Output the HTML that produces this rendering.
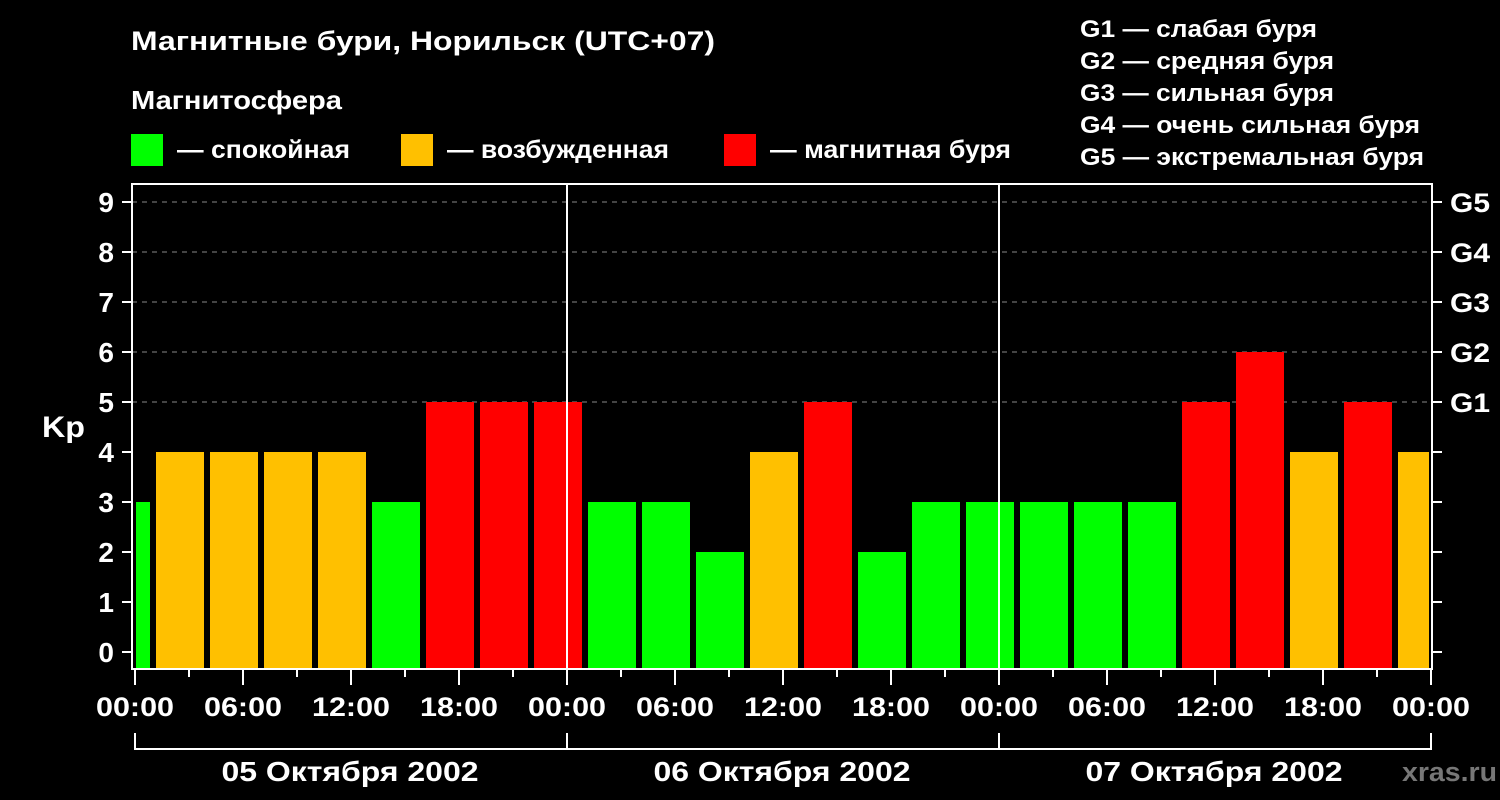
<!DOCTYPE html>
<html><head><meta charset="utf-8"><style>
html,body{margin:0;padding:0;background:#000;width:1500px;height:800px;overflow:hidden}
svg{display:block}
text{font-family:"Liberation Sans",sans-serif;font-weight:bold;fill:#fff}
</style></head><body>
<svg width="1500" height="800" viewBox="0 0 1500 800" xmlns="http://www.w3.org/2000/svg">
<rect width="1500" height="800" fill="#000"/>
<text x="131" y="50" font-size="27" textLength="584" lengthAdjust="spacingAndGlyphs">Магнитные бури, Норильск (UTC+07)</text>
<text x="131" y="109" font-size="26" textLength="211" lengthAdjust="spacingAndGlyphs">Магнитосфера</text>
<rect x="131" y="134" width="32" height="32" fill="#00ff00"/>
<text x="177" y="158" font-size="25" textLength="173" lengthAdjust="spacingAndGlyphs">— спокойная</text>
<rect x="401" y="134" width="32" height="32" fill="#ffc000"/>
<text x="447" y="158" font-size="25" textLength="222" lengthAdjust="spacingAndGlyphs">— возбужденная</text>
<rect x="724" y="134" width="32" height="32" fill="#ff0000"/>
<text x="770" y="158" font-size="25" textLength="241" lengthAdjust="spacingAndGlyphs">— магнитная буря</text>
<g font-size="24">
<text x="1080" y="37" textLength="237" lengthAdjust="spacingAndGlyphs">G1 — слабая буря</text>
<text x="1080" y="69" textLength="254" lengthAdjust="spacingAndGlyphs">G2 — средняя буря</text>
<text x="1080" y="101" textLength="254" lengthAdjust="spacingAndGlyphs">G3 — сильная буря</text>
<text x="1080" y="133" textLength="340" lengthAdjust="spacingAndGlyphs">G4 — очень сильная буря</text>
<text x="1080" y="165" textLength="344" lengthAdjust="spacingAndGlyphs">G5 — экстремальная буря</text>
</g>
<g stroke="#888" stroke-width="1" stroke-dasharray="5,5">
<line x1="132" y1="202" x2="1432" y2="202"/>
<line x1="132" y1="252" x2="1432" y2="252"/>
<line x1="132" y1="302" x2="1432" y2="302"/>
<line x1="132" y1="352" x2="1432" y2="352"/>
<line x1="132" y1="402" x2="1432" y2="402"/>
</g>
<g>
<rect x="136" y="502" width="14" height="166" fill="#00ff00"/>
<rect x="156" y="452" width="48" height="216" fill="#ffc000"/>
<rect x="210" y="452" width="48" height="216" fill="#ffc000"/>
<rect x="264" y="452" width="48" height="216" fill="#ffc000"/>
<rect x="318" y="452" width="48" height="216" fill="#ffc000"/>
<rect x="372" y="502" width="48" height="166" fill="#00ff00"/>
<rect x="426" y="402" width="48" height="266" fill="#ff0000"/>
<rect x="480" y="402" width="48" height="266" fill="#ff0000"/>
<rect x="534" y="402" width="48" height="266" fill="#ff0000"/>
<rect x="588" y="502" width="48" height="166" fill="#00ff00"/>
<rect x="642" y="502" width="48" height="166" fill="#00ff00"/>
<rect x="696" y="552" width="48" height="116" fill="#00ff00"/>
<rect x="750" y="452" width="48" height="216" fill="#ffc000"/>
<rect x="804" y="402" width="48" height="266" fill="#ff0000"/>
<rect x="858" y="552" width="48" height="116" fill="#00ff00"/>
<rect x="912" y="502" width="48" height="166" fill="#00ff00"/>
<rect x="966" y="502" width="48" height="166" fill="#00ff00"/>
<rect x="1020" y="502" width="48" height="166" fill="#00ff00"/>
<rect x="1074" y="502" width="48" height="166" fill="#00ff00"/>
<rect x="1128" y="502" width="48" height="166" fill="#00ff00"/>
<rect x="1182" y="402" width="48" height="266" fill="#ff0000"/>
<rect x="1236" y="352" width="48" height="316" fill="#ff0000"/>
<rect x="1290" y="452" width="48" height="216" fill="#ffc000"/>
<rect x="1344" y="402" width="48" height="266" fill="#ff0000"/>
<rect x="1398" y="452" width="31" height="216" fill="#ffc000"/>
</g>
<g stroke="#fff" stroke-width="2" fill="none">
<line x1="567" y1="183" x2="567" y2="668"/>
<line x1="999" y1="183" x2="999" y2="668"/>
<rect x="132" y="184" width="1300" height="485"/>
</g>
<g stroke="#fff" stroke-width="2">
<line x1="122" y1="202" x2="132" y2="202"/><line x1="122" y1="252" x2="132" y2="252"/><line x1="122" y1="302" x2="132" y2="302"/><line x1="122" y1="352" x2="132" y2="352"/><line x1="122" y1="402" x2="132" y2="402"/><line x1="122" y1="452" x2="132" y2="452"/><line x1="122" y1="502" x2="132" y2="502"/><line x1="122" y1="552" x2="132" y2="552"/><line x1="122" y1="602" x2="132" y2="602"/><line x1="122" y1="652" x2="132" y2="652"/>
<line x1="1432" y1="202" x2="1442" y2="202"/><line x1="1432" y1="252" x2="1442" y2="252"/><line x1="1432" y1="302" x2="1442" y2="302"/><line x1="1432" y1="352" x2="1442" y2="352"/><line x1="1432" y1="402" x2="1442" y2="402"/><line x1="1432" y1="452" x2="1442" y2="452"/><line x1="1432" y1="502" x2="1442" y2="502"/><line x1="1432" y1="552" x2="1442" y2="552"/><line x1="1432" y1="602" x2="1442" y2="602"/><line x1="1432" y1="652" x2="1442" y2="652"/>
</g>
<g font-size="28" text-anchor="end">
<text x="114" y="212">9</text><text x="114" y="262">8</text><text x="114" y="312">7</text><text x="114" y="362">6</text><text x="114" y="412">5</text><text x="114" y="462">4</text><text x="114" y="512">3</text><text x="114" y="562">2</text><text x="114" y="612">1</text><text x="114" y="662">0</text>
</g>
<text x="42" y="437" font-size="30" textLength="43" lengthAdjust="spacingAndGlyphs">Kp</text>
<g font-size="27">
<text x="1450" y="212" textLength="40" lengthAdjust="spacingAndGlyphs">G5</text><text x="1450" y="262" textLength="40" lengthAdjust="spacingAndGlyphs">G4</text><text x="1450" y="312" textLength="40" lengthAdjust="spacingAndGlyphs">G3</text><text x="1450" y="362" textLength="40" lengthAdjust="spacingAndGlyphs">G2</text><text x="1450" y="412" textLength="40" lengthAdjust="spacingAndGlyphs">G1</text>
</g>
<g stroke="#fff" stroke-width="2">
<line x1="135" y1="669" x2="135" y2="685"/><line x1="189" y1="669" x2="189" y2="677"/><line x1="243" y1="669" x2="243" y2="685"/><line x1="297" y1="669" x2="297" y2="677"/><line x1="351" y1="669" x2="351" y2="685"/><line x1="405" y1="669" x2="405" y2="677"/><line x1="459" y1="669" x2="459" y2="685"/><line x1="513" y1="669" x2="513" y2="677"/>
<line x1="567" y1="669" x2="567" y2="685"/><line x1="621" y1="669" x2="621" y2="677"/><line x1="675" y1="669" x2="675" y2="685"/><line x1="729" y1="669" x2="729" y2="677"/><line x1="783" y1="669" x2="783" y2="685"/><line x1="837" y1="669" x2="837" y2="677"/><line x1="891" y1="669" x2="891" y2="685"/><line x1="945" y1="669" x2="945" y2="677"/>
<line x1="999" y1="669" x2="999" y2="685"/><line x1="1053" y1="669" x2="1053" y2="677"/><line x1="1107" y1="669" x2="1107" y2="685"/><line x1="1161" y1="669" x2="1161" y2="677"/><line x1="1215" y1="669" x2="1215" y2="685"/><line x1="1269" y1="669" x2="1269" y2="677"/><line x1="1323" y1="669" x2="1323" y2="685"/><line x1="1377" y1="669" x2="1377" y2="677"/><line x1="1431" y1="669" x2="1431" y2="685"/>
<polyline fill="none" points="135,733 135,749 1431,749 1431,733"/>
<line x1="567" y1="733" x2="567" y2="749"/><line x1="999" y1="733" x2="999" y2="749"/>
</g>
<g font-size="27" text-anchor="middle">
<text x="135" y="716" textLength="78" lengthAdjust="spacingAndGlyphs">00:00</text><text x="243" y="716" textLength="78" lengthAdjust="spacingAndGlyphs">06:00</text><text x="351" y="716" textLength="78" lengthAdjust="spacingAndGlyphs">12:00</text><text x="459" y="716" textLength="78" lengthAdjust="spacingAndGlyphs">18:00</text>
<text x="567" y="716" textLength="78" lengthAdjust="spacingAndGlyphs">00:00</text><text x="675" y="716" textLength="78" lengthAdjust="spacingAndGlyphs">06:00</text><text x="783" y="716" textLength="78" lengthAdjust="spacingAndGlyphs">12:00</text><text x="891" y="716" textLength="78" lengthAdjust="spacingAndGlyphs">18:00</text>
<text x="999" y="716" textLength="78" lengthAdjust="spacingAndGlyphs">00:00</text><text x="1107" y="716" textLength="78" lengthAdjust="spacingAndGlyphs">06:00</text><text x="1215" y="716" textLength="78" lengthAdjust="spacingAndGlyphs">12:00</text><text x="1323" y="716" textLength="78" lengthAdjust="spacingAndGlyphs">18:00</text>
<text x="1431" y="716" textLength="78" lengthAdjust="spacingAndGlyphs">00:00</text>
<text x="350" y="781" font-size="28" textLength="257" lengthAdjust="spacingAndGlyphs">05 Октября 2002</text>
<text x="782" y="781" font-size="28" textLength="257" lengthAdjust="spacingAndGlyphs">06 Октября 2002</text>
<text x="1214" y="781" font-size="28" textLength="257" lengthAdjust="spacingAndGlyphs">07 Октября 2002</text>
</g>
<text x="1402" y="781" font-size="27" textLength="95" lengthAdjust="spacingAndGlyphs" style="fill:#777">xras.ru</text>
</svg>
</body></html>
